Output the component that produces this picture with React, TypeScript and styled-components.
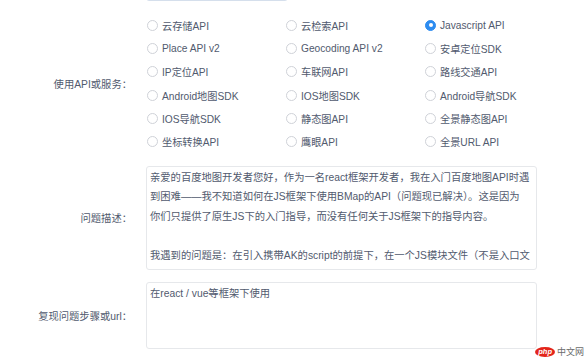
import React from "react";
import styled, { createGlobalStyle } from "styled-components";

const GlobalStyle = createGlobalStyle`
  html, body {
    margin: 0;
    padding: 0;
    background: #fff;
  }
  body {
    font-family: "Liberation Sans", "Noto Sans CJK SC", sans-serif;
    overflow: hidden;
  }
`;

const Page = styled.div`
  position: relative;
  width: 587px;
  height: 362px;
  overflow: hidden;
`;

// the page is scrolled: the previous field sits just above the top edge
const Form = styled.form`
  margin-top: -30px;
`;

const Item = styled.div`
  display: flex;
  align-items: center;
  margin-bottom: 12.5px;
`;

const Label = styled.label`
  flex: 0 0 146px;
  box-sizing: border-box;
  padding-right: 14px;
  text-align: right;
  font-size: 10.3px;
  color: #515a6e;
`;

const Control = styled.div`
  flex: 0 0 391px;
`;

const TextInput = styled.input`
  display: block;
  width: 142px;
  height: 31px;
  box-sizing: border-box;
  border: 1px solid #d5dfec;
  border-radius: 3px;
  outline: none;
`;

const RadioGrid = styled.div`
  display: grid;
  grid-template-columns: repeat(3, 139px);
  grid-auto-rows: 23.3px;
`;

const RadioOption = styled.label`
  display: flex;
  align-items: center;
  padding-left: 1px;
  font-size: 10.2px;
  color: #515a6e;
  white-space: nowrap;
`;

const RadioDot = styled.span<{ $checked?: boolean }>`
  position: relative;
  flex: 0 0 auto;
  width: 11px;
  height: 11px;
  box-sizing: border-box;
  margin-right: 4px;
  border-radius: 50%;
  border: 1px solid ${({ $checked }) => ($checked ? "#2d8cf0" : "#cfd2d8")};
  background: ${({ $checked }) => ($checked ? "#2d8cf0" : "#fff")};

  &::after {
    content: "";
    display: ${({ $checked }) => ($checked ? "block" : "none")};
    position: absolute;
    left: 50%;
    top: 50%;
    width: 4px;
    height: 4px;
    margin: -2px 0 0 -2px;
    border-radius: 50%;
    background: #fff;
  }
`;

const TextArea = styled.textarea<{ $height: number }>`
  display: block;
  width: 391px;
  height: ${({ $height }) => $height}px;
  box-sizing: border-box;
  padding: 1px 3px;
  border: 1px solid #e6e8eb;
  border-radius: 3px;
  resize: none;
  overflow: hidden;
  white-space: pre;
  font-family: "Liberation Sans", "Noto Sans CJK SC", sans-serif;
  font-size: 10.3px;
  line-height: 19.5px;
  color: #515a6e;
  outline: none;
`;

const Watermark = styled.div`
  position: absolute;
  right: 3px;
  bottom: 4px;
  display: flex;
  align-items: center;
  gap: 2px;
  font-size: 9px;
  color: #6b6b6b;
`;

const PhpLogo = styled.span`
  display: inline-block;
  padding: 0 3px;
  height: 10px;
  line-height: 10px;
  border-radius: 50%;
  background: #e3251b;
  color: #fff;
  font-size: 7.5px;
  font-style: italic;
  font-weight: bold;
`;

const options = [
  "云存储API",
  "云检索API",
  "Javascript API",
  "Place API v2",
  "Geocoding API v2",
  "安卓定位SDK",
  "IP定位API",
  "车联网API",
  "路线交通API",
  "Android地图SDK",
  "IOS地图SDK",
  "Android导航SDK",
  "IOS导航SDK",
  "静态图API",
  "全景静态图API",
  "坐标转换API",
  "鹰眼API",
  "全景URL API",
];

const description = [
  "亲爱的百度地图开发者您好，作为一名react框架开发者，我在入门百度地图API时遇",
  "到困难——我不知道如何在JS框架下使用BMap的API（问题现已解决）。这是因为",
  "你们只提供了原生JS下的入门指导，而没有任何关于JS框架下的指导内容。",
  "",
  "我遇到的问题是：在引入携带AK的script的前提下，在一个JS模块文件（不是入口文",
  "件）中直接使用BMap会报错：BMap is not defined。",
].join("\n");

const App = () => {
  return (
    <Page>
      <GlobalStyle />
      <Form>
        <Item>
          <Label />
          <Control>
            <TextInput />
          </Control>
        </Item>
        <Item>
          <Label>使用API或服务：</Label>
          <Control>
            <RadioGrid>
              {options.map((name) => (
                <RadioOption key={name}>
                  <RadioDot $checked={name === "Javascript API"} />
                  {name}
                </RadioOption>
              ))}
            </RadioGrid>
          </Control>
        </Item>
        <Item>
          <Label>问题描述：</Label>
          <Control>
            <TextArea $height={104} wrap="off" defaultValue={description} />
          </Control>
        </Item>
        <Item>
          <Label>复现问题步骤或url：</Label>
          <Control>
            <TextArea $height={67} wrap="off" defaultValue="在react / vue等框架下使用" />
          </Control>
        </Item>
      </Form>
      <Watermark>
        <PhpLogo>php</PhpLogo>
        中文网
      </Watermark>
    </Page>
  );
};

export default App;
